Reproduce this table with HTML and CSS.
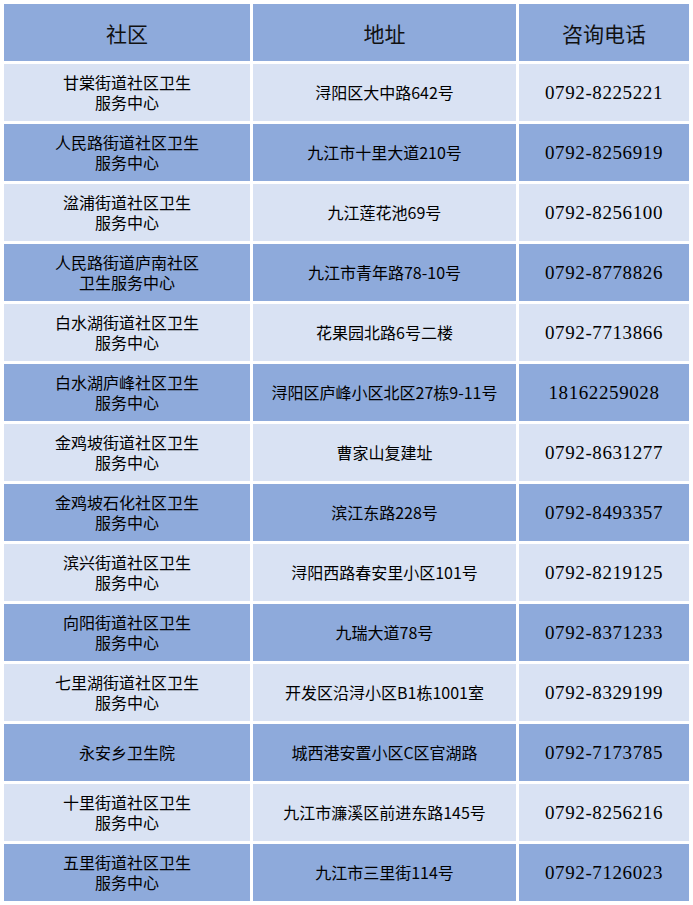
FILE: index.html
```html
<!DOCTYPE html>
<html lang="zh-CN">
<head>
<meta charset="utf-8">
<title>社区卫生服务中心</title>
<link rel="stylesheet" href="styles.css">
</head>
<body>
<div class="table">
  <div class="cell head">社区</div>
  <div class="cell head">地址</div>
  <div class="cell head">咨询电话</div>

  <div class="cell light name"><span class="ln">甘棠街道社区卫生</span><span class="ln">服务中心</span></div>
  <div class="cell light addr">浔阳区大中路642号</div>
  <div class="cell light tel">0792-8225221</div>

  <div class="cell dark name"><span class="ln">人民路街道社区卫生</span><span class="ln">服务中心</span></div>
  <div class="cell dark addr">九江市十里大道210号</div>
  <div class="cell dark tel">0792-8256919</div>

  <div class="cell light name"><span class="ln">湓浦街道社区卫生</span><span class="ln">服务中心</span></div>
  <div class="cell light addr">九江莲花池69号</div>
  <div class="cell light tel">0792-8256100</div>

  <div class="cell dark name"><span class="ln">人民路街道庐南社区</span><span class="ln">卫生服务中心</span></div>
  <div class="cell dark addr">九江市青年路78-10号</div>
  <div class="cell dark tel">0792-8778826</div>

  <div class="cell light name"><span class="ln">白水湖街道社区卫生</span><span class="ln">服务中心</span></div>
  <div class="cell light addr">花果园北路6号二楼</div>
  <div class="cell light tel">0792-7713866</div>

  <div class="cell dark name"><span class="ln">白水湖庐峰社区卫生</span><span class="ln">服务中心</span></div>
  <div class="cell dark addr">浔阳区庐峰小区北区27栋9-11号</div>
  <div class="cell dark tel">18162259028</div>

  <div class="cell light name"><span class="ln">金鸡坡街道社区卫生</span><span class="ln">服务中心</span></div>
  <div class="cell light addr">曹家山复建址</div>
  <div class="cell light tel">0792-8631277</div>

  <div class="cell dark name"><span class="ln">金鸡坡石化社区卫生</span><span class="ln">服务中心</span></div>
  <div class="cell dark addr">滨江东路228号</div>
  <div class="cell dark tel">0792-8493357</div>

  <div class="cell light name"><span class="ln">滨兴街道社区卫生</span><span class="ln">服务中心</span></div>
  <div class="cell light addr">浔阳西路春安里小区101号</div>
  <div class="cell light tel">0792-8219125</div>

  <div class="cell dark name"><span class="ln">向阳街道社区卫生</span><span class="ln">服务中心</span></div>
  <div class="cell dark addr">九瑞大道78号</div>
  <div class="cell dark tel">0792-8371233</div>

  <div class="cell light name"><span class="ln">七里湖街道社区卫生</span><span class="ln">服务中心</span></div>
  <div class="cell light addr">开发区沿浔小区B1栋1001室</div>
  <div class="cell light tel">0792-8329199</div>

  <div class="cell dark name"><span class="ln">永安乡卫生院</span></div>
  <div class="cell dark addr">城西港安置小区C区官湖路</div>
  <div class="cell dark tel">0792-7173785</div>

  <div class="cell light name"><span class="ln">十里街道社区卫生</span><span class="ln">服务中心</span></div>
  <div class="cell light addr">九江市濂溪区前进东路145号</div>
  <div class="cell light tel">0792-8256216</div>

  <div class="cell dark name"><span class="ln">五里街道社区卫生</span><span class="ln">服务中心</span></div>
  <div class="cell dark addr">九江市三里街114号</div>
  <div class="cell dark tel">0792-7126023</div>
</div>
</body>
</html>
```

FILE: styles.css
```css
html, body {
  margin: 0;
  padding: 0;
  background: #ffffff;
}

body {
  font-family: "Noto Sans CJK SC", "Noto Sans", sans-serif;
  color: #000000;
}

.table {
  display: grid;
  grid-template-columns: 246px 263px 170px;
  grid-auto-rows: 57px;
  gap: 3px;
  padding: 4px 4px 0 4px;
}

.cell {
  display: flex;
  align-items: center;
  justify-content: center;
  text-align: center;
  font-size: 16px;
  line-height: 19px;
}

.name {
  flex-direction: column;
  padding-bottom: 1px;
}

.ln {
  display: block;
  height: 20px;
  line-height: 20px;
  overflow: visible;
}

.head {
  background: #8eaadb;
  font-size: 21px;
  line-height: 24px;
  color: #111111;
  padding-top: 1px;
}

.dark {
  background: #8eaadb;
}

.light {
  background: #d9e2f3;
}

.tel {
  font-family: "Liberation Serif", serif;
  font-size: 19px;
  letter-spacing: 0.6px;
}
```
